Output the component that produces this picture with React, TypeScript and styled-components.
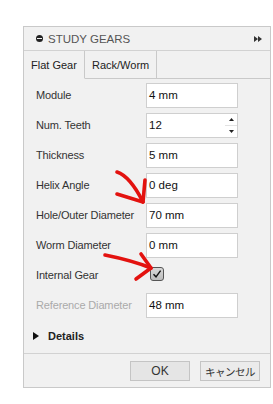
import React from 'react';
import styled, { createGlobalStyle } from 'styled-components';

const GlobalStyle = createGlobalStyle`
  html, body {
    margin: 0;
    padding: 0;
    background: #fff;
  }
  body {
    font-family: "Liberation Sans", Arial, sans-serif;
    font-size: 11px;
    color: #333;
  }
`;

interface Field {
  label: string;
  value?: string;
  spinner?: boolean;
  checkbox?: boolean;
  disabled?: boolean;
}

const fields: Field[] = [
  { label: 'Module', value: '4 mm' },
  { label: 'Num. Teeth', value: '12', spinner: true },
  { label: 'Thickness', value: '5 mm' },
  { label: 'Helix Angle', value: '0 deg' },
  { label: 'Hole/Outer Diameter', value: '70 mm' },
  { label: 'Worm Diameter', value: '0 mm' },
  { label: 'Internal Gear', checkbox: true },
  { label: 'Reference Diameter', value: '48 mm', disabled: true },
];

export default function App() {
  return (
    <>
      <GlobalStyle />
      <Page>
        <Panel>
          <Header>
            <HeaderIcon />
            <HeaderTitle>STUDY GEARS</HeaderTitle>
            <Expand viewBox="0 0 8 6" width="8" height="6">
              <path d="M0 0 L4 3 L0 6 Z M4 0 L8 3 L4 6 Z" fill="#333" />
            </Expand>
          </Header>
          <Tabs>
            <Tab active>Flat Gear</Tab>
            <Tab>Rack/Worm</Tab>
            <TabFill />
          </Tabs>
          <Form>
            {fields.map(f => (
              <Row key={f.label}>
                <Label disabled={f.disabled}>{f.label}</Label>
                {f.checkbox ? (
                  <Check>
                    <svg viewBox="0 0 10 10" width="10" height="10">
                      <path d="M1.5 5.2 L4 7.8 L8.6 1.6" stroke="#111" strokeWidth="1.4" fill="none" />
                    </svg>
                  </Check>
                ) : (
                  <Input>
                    {f.value}
                    {f.spinner && (
                      <Spinner>
                        <SpinBtn>
                          <svg viewBox="0 0 5 3" width="5" height="3"><path d="M0 3 L2.5 0 L5 3 Z" fill="#222" /></svg>
                        </SpinBtn>
                        <SpinBtn>
                          <svg viewBox="0 0 5 3" width="5" height="3"><path d="M0 0 L2.5 3 L5 0 Z" fill="#222" /></svg>
                        </SpinBtn>
                      </Spinner>
                    )}
                  </Input>
                )}
              </Row>
            ))}
            <Details>
              <svg viewBox="0 0 6 8" width="6" height="8"><path d="M0 0 L6 4 L0 8 Z" fill="#111" /></svg>
              <span>Details</span>
            </Details>
          </Form>
          <Footer>
            <Button>OK</Button>
            <Button light cjk>キャンセル</Button>
          </Footer>
        </Panel>
        <Arrows viewBox="0 0 273 404" width="273" height="404">
          <g stroke="#e3120f" strokeWidth="3.6" fill="none" strokeLinecap="round" strokeLinejoin="round">
            <path d="M117 172 C126 175 134 184 143 202" />
            <path d="M117 194 L143 202 L145 180" />
            <path d="M105 255 C120 258 136 262 151 268" />
            <path d="M141 254 L151 268 L136 279" />
          </g>
        </Arrows>
      </Page>
    </>
  );
}

const Page = styled.div`
  position: relative;
  width: 273px;
  height: 404px;
  padding: 26px 0 0 23px;
  box-sizing: border-box;
`;

const Panel = styled.div`
  width: 248px;
  height: 362px;
  box-sizing: border-box;
  border: 1px solid #c9c9c9;
  background: #f1f1f1;
  display: flex;
  flex-direction: column;
`;

const Header = styled.div`
  height: 23px;
  border-bottom: 1px solid #d2d2d2;
  display: flex;
  align-items: center;
  padding: 0 8px 0 12px;
`;

const HeaderIcon = styled.span`
  width: 7px;
  height: 7px;
  border-radius: 50%;
  background: #222;
  position: relative;
  margin-right: 5px;
  &::after {
    content: '';
    position: absolute;
    left: 1px;
    right: 1px;
    top: 3px;
    height: 1px;
    background: #f1f1f1;
  }
`;

const HeaderTitle = styled.span`
  flex: 1;
  color: #555;
  font-size: 11.5px;
`;

const Expand = styled.svg`
  display: block;
`;

const Tabs = styled.div`
  height: 28px;
  display: flex;
`;

const Tab = styled.div<{ active?: boolean }>`
  display: flex;
  align-items: center;
  padding: 0 7px;
  color: #222;
  white-space: nowrap;
  box-sizing: border-box;
  border-right: 1px solid #c9c9c9;
  border-bottom: 1px solid ${p => (p.active ? 'transparent' : '#c9c9c9')};
  width: ${p => (p.active ? '61px' : '72px')};
`;

const TabFill = styled.div`
  flex: 1;
  border-bottom: 1px solid #c9c9c9;
`;

const Form = styled.div`
  flex: 1;
  padding: 4px 0 0 12px;
`;

const Row = styled.div`
  height: 30px;
  display: flex;
  align-items: flex-start;
`;

const Label = styled.div<{ disabled?: boolean }>`
  width: 110px;
  height: 25px;
  line-height: 25px;
  white-space: nowrap;
  letter-spacing: -0.15px;
  color: ${p => (p.disabled ? '#aaa' : '#333')};
`;

const Input = styled.div`
  position: relative;
  width: 92px;
  height: 25px;
  box-sizing: border-box;
  border: 1px solid #cfcfcf;
  background: #fff;
  line-height: 23px;
  padding-left: 2px;
  color: #111;
  font-size: 11.5px;
`;

const Spinner = styled.div`
  position: absolute;
  right: 0;
  top: 0;
  bottom: 0;
  width: 12px;
  display: flex;
  flex-direction: column;
`;

const SpinBtn = styled.div`
  flex: 1;
  display: flex;
  align-items: center;
  justify-content: center;
  & + & {
    border-top: 1px solid #e2e2e2;
  }
  svg {
    display: block;
  }
`;

const Check = styled.div`
  margin: 4px 0 0 4px;
  width: 14px;
  height: 14px;
  box-sizing: border-box;
  border: 1px solid #555;
  border-radius: 3px;
  background: linear-gradient(#d8d8d8, #bdbdbd);
  display: flex;
  align-items: center;
  justify-content: center;
  svg {
    display: block;
  }
`;

const Details = styled.div`
  height: 26px;
  margin-left: -3px;
  display: flex;
  align-items: center;
  gap: 9px;
  font-weight: bold;
  color: #222;
  svg {
    display: block;
  }
`;

const Footer = styled.div`
  height: 34px;
  border-top: 1px solid #d2d2d2;
  display: flex;
  justify-content: flex-end;
  align-items: flex-start;
  gap: 10px;
  padding: 7px 10px 0 0;
  box-sizing: border-box;
`;

const Button = styled.div<{ light?: boolean; cjk?: boolean }>`
  width: 60px;
  height: 20px;
  box-sizing: border-box;
  border: 1px solid #c4c4c4;
  background: ${p => (p.light ? '#ebebeb' : '#e5e5e5')};
  color: #333;
  font-family: "Liberation Sans", "Noto Sans CJK JP", sans-serif;
  font-size: ${p => (p.cjk ? '10.5px' : '12px')};
  letter-spacing: ${p => (p.cjk ? '-0.5px' : '0')};
  white-space: nowrap;
  display: flex;
  align-items: center;
  justify-content: center;
`;

const Arrows = styled.svg`
  position: absolute;
  left: 0;
  top: 0;
  pointer-events: none;
`;
